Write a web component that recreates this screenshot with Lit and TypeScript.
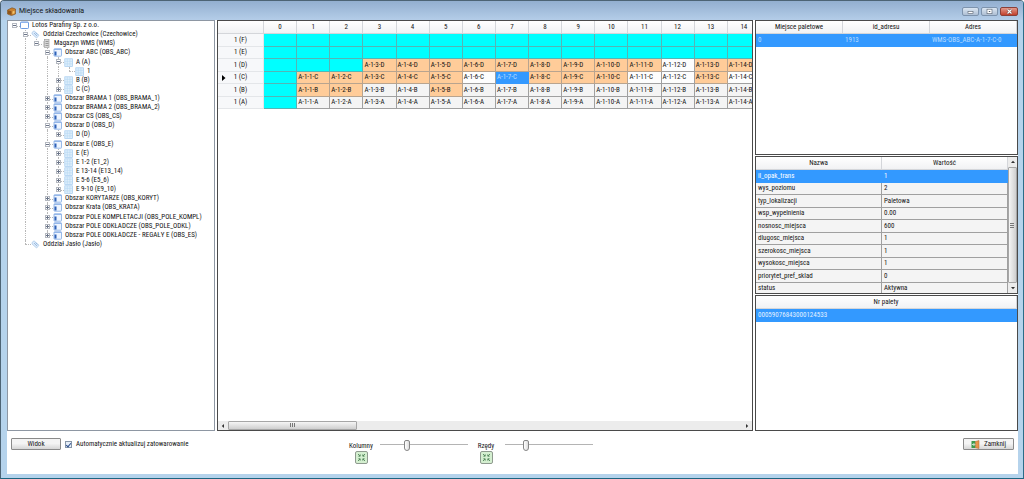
import { LitElement, html, css, svg, nothing } from "lit";
import { customElement, state } from "lit/decorators.js";
import { classMap } from "lit/directives/class-map.js";

type Kind = "company" | "branch" | "store" | "area" | "rack";
interface Node {
  level: number;
  label: string;
  kind: Kind;
  sign?: "+" | "-";
  last?: boolean;
}

const TREE: Node[] = [
  { level: 0, label: "Lotos Parafiny Sp. z o.o.", kind: "company", sign: "-", last: true },
  { level: 1, label: "Oddział Czechowice (Czechowice)", kind: "branch", sign: "-" },
  { level: 2, label: "Magazyn WMS (WMS)", kind: "store", sign: "-", last: true },
  { level: 3, label: "Obszar ABC (OBS_ABC)", kind: "area", sign: "-" },
  { level: 4, label: "A (A)", kind: "rack", sign: "-" },
  { level: 5, label: "1", kind: "rack", last: true },
  { level: 4, label: "B (B)", kind: "rack", sign: "+" },
  { level: 4, label: "C (C)", kind: "rack", sign: "+", last: true },
  { level: 3, label: "Obszar BRAMA 1 (OBS_BRAMA_1)", kind: "area", sign: "+" },
  { level: 3, label: "Obszar BRAMA 2 (OBS_BRAMA_2)", kind: "area", sign: "+" },
  { level: 3, label: "Obszar CS (OBS_CS)", kind: "area", sign: "+" },
  { level: 3, label: "Obszar D (OBS_D)", kind: "area", sign: "-" },
  { level: 4, label: "D (D)", kind: "rack", sign: "+", last: true },
  { level: 3, label: "Obszar E (OBS_E)", kind: "area", sign: "-" },
  { level: 4, label: "E (E)", kind: "rack", sign: "+" },
  { level: 4, label: "E 1-2 (E1_2)", kind: "rack", sign: "+" },
  { level: 4, label: "E 13-14 (E13_14)", kind: "rack", sign: "+" },
  { level: 4, label: "E 5-6 (E5_6)", kind: "rack", sign: "+" },
  { level: 4, label: "E 9-10 (E9_10)", kind: "rack", sign: "+", last: true },
  { level: 3, label: "Obszar KORYTARZE (OBS_KORYT)", kind: "area", sign: "+" },
  { level: 3, label: "Obszar Krata (OBS_KRATA)", kind: "area", sign: "+" },
  { level: 3, label: "Obszar POLE KOMPLETACJI (OBS_POLE_KOMPL)", kind: "area", sign: "+" },
  { level: 3, label: "Obszar POLE ODKŁADCZE (OBS_POLE_ODKL)", kind: "area", sign: "+" },
  { level: 3, label: "Obszar POLE ODKŁADCZE - REGAŁY E (OBS_ES)", kind: "area", sign: "+", last: true },
  { level: 1, label: "Oddział Jasło (Jasło)", kind: "branch", last: true },
];

const range = (from: number, to: number) => Array.from({ length: to - from + 1 }, (_, i) => from + i);
const COLUMNS = range(0, 14);
const ROWS: { id: string; from: number; full: number[] }[] = [
  { id: "F", from: 15, full: [] },
  { id: "E", from: 15, full: [] },
  { id: "D", from: 3, full: [3, 4, 5, 6, 7, 8, 9, 10, 11, 13, 14] },
  { id: "C", from: 1, full: [1, 2, 3, 4, 5, 8, 9, 10, 13] },
  { id: "B", from: 1, full: [1, 2, 5] },
  { id: "A", from: 1, full: [] },
];

const PROPS: [string, string][] = [
  ["il_opak_trans", "1"],
  ["wys_poziomu", "2"],
  ["typ_lokalizacji", "Paletowa"],
  ["wsp_wypelnienia", "0.00"],
  ["nosnosc_miejsca", "600"],
  ["dlugosc_miejsca", "1"],
  ["szerokosc_miejsca", "1"],
  ["wysokosc_miejsca", "1"],
  ["priorytet_pref_sklad", "0"],
  ["status", "Aktywna"],
];

const ICONS = {
  company: svg`<rect x=".5" y="1" width="8" height="6.5" rx=".8" fill="#fff" stroke="#6d9be0"/><path d="M1 1.5h7" stroke="#8fb4ec"/>`,
  branch: svg`<path d="M1 2.5L3 .8l5 4.4-2.4 2.8L1 4z" fill="#dcebfa" stroke="#a9c6e6" stroke-width=".7"/><path d="M3 3l3 3M4.500 2.500l2 2" stroke="#7fa8d6" stroke-width=".7"/>`,
  store: svg`<rect x="2.500" y=".5" width="4.500" height="8" fill="#d8d8d8" stroke="#a2a2a2" stroke-width=".7"/><path d="M3.500 2.500h3M3.500 4.500h3M3.500 6.500h3" stroke="#8a8a8a" stroke-width=".8"/><path d="M1.500 2v6" stroke="#c4c4c4" stroke-width=".7"/>`,
  area: svg`<rect x="1" y=".8" width="7.500" height="7.400" rx=".6" fill="#eef5ff" stroke="#8db2e6" stroke-width=".9"/><path d="M1 1.400h7.500" stroke="#8db2e6"/><rect x="1.500" y="3.500" width="2" height="4" fill="#2f62b8"/>`,
  rack: svg`<rect x=".8" y=".8" width="7.600" height="7.600" fill="#deeefc" stroke="#a3cbee" stroke-width=".7"/><path d="M3.300 1v7M5.900 1v7M1 3.300h7.400M1 5.900h7.400" stroke="#b6d6f2" stroke-width=".6"/>`,
};

const fitIcon = svg`<rect x=".5" y=".5" width="12" height="12" rx="1.500" fill="#d4efd0" stroke="#8f9a8f"/>
  <path d="M3 3l2 2M5.200 3.400v1.800H3.400M10 3L8 5M7.800 3.400v1.800h1.800M3 10l2-2M5.200 9.600V7.800H3.400M10 10L8 8M7.800 9.600V7.800h1.800" fill="none" stroke="#4f8558" stroke-width=".9"/>`;

@customElement("app-root")
export class AppRoot extends LitElement {
  @state() private auto = true;

  static styles = css`
    :host { display: block; height: 100vh; font: 7px/9px "Roboto Condensed", Roboto, "Liberation Sans", sans-serif; color: #141414; }
    * { box-sizing: border-box; }
    button, input { font: inherit; color: inherit; margin: 0; }
    .window { height: 100%; display: flex; flex-direction: column; overflow: hidden; padding: 0 5px 4px 6px; background: #b5d3ec;
      border: 1px solid #4d6475; border-right-color: #2b6c88; border-bottom-color: #1c6682; border-radius: 4px 4px 0 0; }
    .title { flex: none; display: flex; align-items: center; height: 19px; gap: 3px; margin: 0 -5px 0 -6px; padding: 2px 5px 0 6px; background: linear-gradient(#93afd0, #b4cde8); }
    .title svg { width: 9px; height: 9px; }
    h1 { flex: 1; margin: 0; font: 7px/9px Roboto, "Liberation Sans", sans-serif; }
    .caption { display: flex; gap: 2px; }
    .caption button { width: 17px; height: 9px; padding: 0; display: grid; place-items: center; border: 1px solid #7d93ad; border-radius: 2px; background: linear-gradient(#dbe6f2, #aebfd3); }
    .caption .close { width: 18px; background: linear-gradient(#e39a8c, #c2402c); border-color: #8a4038; }
    .caption svg { width: 9px; height: 7px; }
    .client { flex: 1; min-height: 0; display: flex; flex-direction: column; background: #fff; }
    .panes { flex: 1; min-height: 0; display: grid; grid-template-columns: 208px minmax(0, 1fr) 263px; gap: 2px; }
    .tree { border: 1px solid #8e97a3; overflow: hidden; }
    .nodes { margin: 0; padding: 0; list-style: none; display: grid; grid-auto-rows: 1fr; height: 228px; }
    .node { display: flex; align-items: center; white-space: nowrap; padding-left: 1px; }
    .cell, .toggle { position: relative; flex: none; width: 11px; align-self: stretch; }
    .pipe::before, .toggle::before { content: ""; position: absolute; left: 5px; top: 0; bottom: 0; border-left: 1px dotted #b8b8b8; }
    .toggle.last::before { bottom: 50%; }
    .toggle.only::before { display: none; }
    .toggle::after { content: ""; position: absolute; left: 5px; right: 0; top: 50%; border-top: 1px dotted #b8b8b8; }
    .sign { position: absolute; z-index: 1; left: 3px; top: 2px; width: 5px; height: 5px; display: block; }
    .node .icon { width: 9px; height: 9px; flex: none; margin-right: 3px; }
    .pane { min-width: 0; min-height: 0; border: 1px solid #4a4a4a; background: #fff; overflow: hidden; }
    .grid { display: flex; flex-direction: column; }
    .view { flex: 1; min-height: 0; overflow: hidden; }
    .side { min-height: 0; display: grid; grid-template-rows: 135px 138px minmax(0, 1fr); gap: 1px; }
    table { border-collapse: separate; border-spacing: 0; table-layout: fixed; width: 100%; }
    .map { width: 543px; }
    .map .head { width: 46px; }
    th { font-weight: normal; padding: 0; text-align: center; }
    thead th { height: 13px; background: linear-gradient(#fff, #f1f2f4); border: solid #d4d6da; border-width: 0 1px 1px 0; }
    td { padding: 0 0 0 1px; white-space: nowrap; overflow: hidden; border: solid #a0a0a0; border-width: 0 1px 1px 0; background: #f4f4f4; }
    .side td { padding-left: 2px; }
    tbody tr { height: 12px; }
    tbody tr:nth-child(odd) { height: 13px; }
    tbody th { position: relative; background: #f7f8fa; border: solid #e4e6e9; border-width: 0 1px 1px 0; }
    .current { position: absolute; left: 4px; top: 3px; width: 4px; height: 6px; }
    .none { background: #00ffff; border-color: #55b5b5; }
    .full { background: #ffcc99; border-color: #b8a48f; }
    .free { background: #fdfdfd; }
    .picked, .sel td { background: #3399ff; color: #b9dcff; border-color: #3399ff; }
    .props .sel td { color: #fff; }
    .codes .sel td { color: #e2f0ff; }
    .hbar { flex: none; display: flex; align-items: center; height: 9px; background: #ececec; }
    .arrow { width: 10px; height: 9px; padding: 0; border: 0; background: none; display: grid; place-items: center; }
    .arrow svg { width: 4px; height: 4px; display: block; }
    .track { flex: 1; display: flex; height: 9px; }
    .thumb { width: 25%; display: grid; place-items: center; border: 1px solid #a6a6a6; border-radius: 1px; background: linear-gradient(#f5f5f5, #cfcfcf); }
    .thumb svg { width: 5px; height: 5px; display: block; }
    .props { display: flex; }
    .props .view { min-width: 0; }
    .vbar { flex: none; width: 9px; display: flex; flex-direction: column; background: #ececec; }
    .vbar .arrow { width: 9px; height: 10px; }
    .vbar .thumb { width: 9px; flex: 1; background: linear-gradient(90deg, #f5f5f5, #cfcfcf); }
    .footer { flex: none; display: flex; align-items: flex-start; height: 43px; padding: 7px 4px 0 4px; }
    .btn { height: 12px; padding: 0; border: 1px solid #8a8a8a; border-radius: 1px; background: linear-gradient(#f4f4f4 45%, #d6d6d6); display: flex; align-items: center; justify-content: center; gap: 4px; }
    .view-btn { width: 50px; }
    .exit { width: 51px; margin-left: auto; }
    .exit svg { width: 9px; height: 9px; }
    .auto { display: flex; align-items: center; gap: 4px; height: 12px; margin-left: 4px; width: 284px; }
    .auto input { appearance: none; width: 7px; height: 7px; border: 1px solid #8796a8; background: #e6eef8; display: grid; place-items: center; }
    .auto input:checked::after { content: ""; width: 2px; height: 4px; border: solid #2b4d8c; border-width: 0 1px 1px 0; transform: rotate(40deg); }
    .zoom { display: flex; align-items: flex-start; gap: 7px; width: 125px; }
    .zoom-label { display: flex; flex-direction: column; align-items: center; flex: none; width: 24px; padding-top: 4px; }
    .fit { width: 13px; height: 13px; padding: 0; border: 0; background: none; }
    .fit svg { display: block; width: 13px; height: 13px; }
    input[type="range"] { appearance: none; flex: none; width: 88px; height: 12px; background: none; }
    input[type="range"]::-webkit-slider-runnable-track { height: 1px; background: #b4b4b4; }
    input[type="range"]::-webkit-slider-thumb { appearance: none; width: 6px; height: 11px; margin-top: -4px; border: 1px solid #858585; border-radius: 2px 2px 3px 3px; background: linear-gradient(90deg, #fff, #dcdcdc); }
  `;

  private node(n: Node, i: number) {
    const hasMore = (level: number) => {
      for (let k = i + 1; k < TREE.length; k++) {
        if (TREE[k].level === level) return true;
        if (TREE[k].level < level) return false;
      }
      return false;
    };
    return html`<li class="node" role="treeitem" aria-level=${n.level + 1}>
      ${range(0, n.level - 1).map((l) => html`<span class=${classMap({ cell: true, pipe: hasMore(l) })}></span>`)}
      <span class=${classMap({ toggle: true, last: !!n.last, only: n.level === 0 })}>
        ${n.sign
          ? html`<svg class="sign" viewBox="0 0 5 5"><rect x=".5" y=".5" width="4" height="4" fill="#fff" stroke="#b4b8c0"/><path d=${n.sign === "+" ? "M1 2.5h3M2.5 1v3" : "M1 2.5h3"} stroke="#6a7488"/></svg>`
          : nothing}
      </span>
      <svg class="icon" viewBox="0 0 9 9">${ICONS[n.kind]}</svg>
      <span>${n.label}</span>
    </li>`;
  }

  private place(row: (typeof ROWS)[number], col: number) {
    if (col < row.from) return html`<td class="none"></td>`;
    const picked = row.id === "C" && col === 7;
    const full = row.full.includes(col);
    const free = !full && (row.id === "C" || row.id === "D");
    return html`<td class=${classMap({ picked, full, free: free && !picked })}>A-1-${col}-${row.id}</td>`;
  }

  private arrow(label: string, d: string) {
    return html`<button class="arrow" aria-label=${label}><svg viewBox="0 0 4 4"><path d=${d} fill="#333"/></svg></button>`;
  }

  private zoom(id: string, label: string, value: number) {
    return html`<div class="zoom">
      <div class="zoom-label">
        <label for=${id}>${label}</label>
        <button class="fit" aria-label="Dopasuj"><svg viewBox="0 0 13 13">${fitIcon}</svg></button>
      </div>
      <input id=${id} type="range" min="0" max="100" .value=${String(value)} />
    </div>`;
  }

  render() {
    return html`<div class="window">
      <header class="title">
        <svg viewBox="0 0 9 9"><path d="M.5 3L5 .8 8.500 2v5L4.500 8.600.5 7z" fill="#c9822f" stroke="#7a4a17" stroke-width=".6"/><path d="M1 3.200l3.500 1V8L1 6.800z" fill="#8f5419"/><path d="M5.500 4.500l2-.7v2.400l-2 .8z" fill="#f3c46c"/></svg>
        <h1>Miejsce składowania</h1>
        <div class="caption">
          <button aria-label="Minimalizuj"><svg viewBox="0 0 9 7"><rect x="2" y="3.500" width="5" height="2" fill="#fff" stroke="#55606e" stroke-width=".6"/></svg></button>
          <button aria-label="Maksymalizuj"><svg viewBox="0 0 9 7"><rect x="2" y="1.200" width="5" height="4.500" fill="#fff" stroke="#55606e" stroke-width=".6"/><rect x="3.800" y="3" width="1.500" height="1" fill="#55606e"/></svg></button>
          <button class="close" aria-label="Zamknij okno"><svg viewBox="0 0 9 7"><path d="M2.500 1.500l4 4M6.500 1.500l-4 4" stroke="#5c2a25" stroke-width="2.200"/><path d="M2.500 1.500l4 4M6.500 1.500l-4 4" stroke="#fff" stroke-width="1.300"/></svg></button>
        </div>
      </header>
      <main class="client">
        <div class="panes">
          <nav class="tree"><ul class="nodes" role="tree">${TREE.map((n, i) => this.node(n, i))}</ul></nav>
          <section class="pane grid">
            <div class="view">
              <table class="map">
                <thead><tr><th class="head"></th>${COLUMNS.map((c) => html`<th>${c}</th>`)}</tr></thead>
                <tbody>
                  ${ROWS.map((r) => html`<tr>
                    <th>${r.id === "C" ? html`<svg class="current" viewBox="0 0 4 6"><path d="M0 0l3.500 3L0 6z"/></svg>` : nothing}1 (${r.id})</th>
                    ${COLUMNS.map((c) => this.place(r, c))}
                  </tr>`)}
                </tbody>
              </table>
            </div>
            <div class="hbar">
              ${this.arrow("W lewo", "M3 0v4L.8 2z")}
              <div class="track"><div class="thumb"><svg viewBox="0 0 5 5"><path d="M.5 0v4M2.500 0v4M4.500 0v4" stroke="#777"/></svg></div></div>
              ${this.arrow("W prawo", "M1 0v4L3.200 2z")}
            </div>
          </section>
          <div class="side">
            <section class="pane">
              <table>
                <thead><tr><th>Miejsce paletowe</th><th>id_adresu</th><th>Adres</th></tr></thead>
                <tbody><tr class="sel"><td>0</td><td>1913</td><td>WMS-OBS_ABC-A-1-7-C-0</td></tr></tbody>
              </table>
            </section>
            <section class="pane props">
              <div class="view">
                <table>
                  <thead><tr><th>Nazwa</th><th>Wartość</th></tr></thead>
                  <tbody>${PROPS.map(([k, v], i) => html`<tr class=${i === 0 ? "sel" : ""}><td>${k}</td><td>${v}</td></tr>`)}</tbody>
                </table>
              </div>
              <div class="vbar">
                ${this.arrow("W górę", "M0 3h4L2 .8z")}
                <div class="thumb"><svg viewBox="0 0 5 5"><path d="M0 .5h4M0 2.500h4M0 4.500h4" stroke="#777"/></svg></div>
                ${this.arrow("W dół", "M0 1h4L2 3.200z")}
              </div>
            </section>
            <section class="pane codes">
              <table>
                <thead><tr><th>Nr palety</th></tr></thead>
                <tbody><tr class="sel"><td>00059076843000124533</td></tr></tbody>
              </table>
            </section>
          </div>
        </div>
        <footer class="footer">
          <button class="btn view-btn">Widok</button>
          <label class="auto"><input type="checkbox" .checked=${this.auto} @change=${(e: Event) => (this.auto = (e.target as HTMLInputElement).checked)} />Automatycznie aktualizuj zatowarowanie</label>
          ${this.zoom("cols", "Kolumny", 29)} ${this.zoom("rows", "Rzędy", 22)}
          <button class="btn exit"><svg viewBox="0 0 9 9"><path d="M.5 1h4v7h-4z" fill="#3f9a4c"/><path d="M4.500 1.500L8 .5v8l-3.500-.8z" fill="#e8944a" stroke="#b06a2c" stroke-width=".5"/><path d="M1 4.500h2.500M2.500 3l1.300 1.500L2.500 6" fill="none" stroke="#fff" stroke-width=".7"/></svg>Zamknij</button>
        </footer>
      </main>
    </div>`;
  }
}
